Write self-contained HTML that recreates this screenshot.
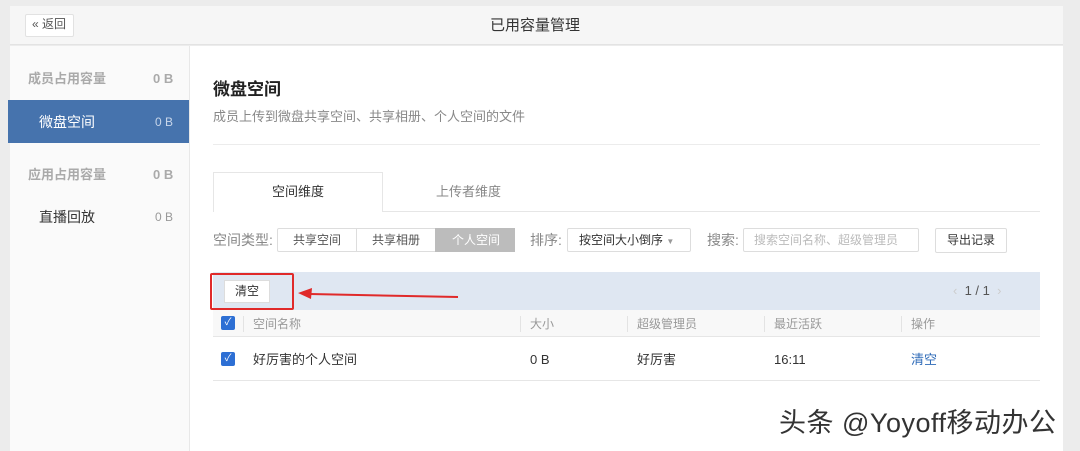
<!DOCTYPE html>
<html><head><meta charset="utf-8"><style>
*{margin:0;padding:0;box-sizing:border-box}
body{width:1080px;height:451px;overflow:hidden;background:#ececec;font-family:"Liberation Sans","Noto Sans CJK SC",sans-serif;position:relative}
.abs{position:absolute}
.hdr{left:10px;top:6px;width:1053px;height:39px;background:#f6f6f6;border-bottom:1px solid #e3e3e3}
.main{left:10px;top:46px;width:1053px;height:405px;background:#fff}
.side{left:10px;top:46px;width:180px;height:405px;background:#fafafa;border-right:1px solid #e8e8e8}
.t{position:absolute;white-space:nowrap;line-height:1}
</style></head><body>
<div class="abs hdr"></div>
<div class="abs" style="left:25px;top:14px;width:49px;height:23px;background:#fff;border:1px solid #e2e2e2;border-radius:2px;font-size:12px;color:#555;line-height:19px;padding-left:6px">« 返回</div>
<div class="t" style="left:490px;top:18px;font-size:15px;color:#333">已用容量管理</div>
<div class="abs main"></div>
<div class="abs side"></div>
<div class="t" style="left:28px;top:72px;font-size:13px;color:#aaa;font-weight:bold">成员占用容量</div>
<div class="t" style="left:153px;top:72px;font-size:13px;color:#aaa;font-weight:bold">0 B</div>
<div class="abs" style="left:8px;top:100px;width:181px;height:43px;background:#4673ad"></div>
<div class="t" style="left:39px;top:115px;font-size:14px;color:#fff">微盘空间</div>
<div class="t" style="left:155px;top:116px;font-size:12px;color:#c8d6ea">0 B</div>
<div class="t" style="left:28px;top:168px;font-size:13px;color:#aaa;font-weight:bold">应用占用容量</div>
<div class="t" style="left:153px;top:168px;font-size:13px;color:#aaa;font-weight:bold">0 B</div>
<div class="t" style="left:39px;top:210px;font-size:14px;color:#333">直播回放</div>
<div class="t" style="left:155px;top:211px;font-size:12px;color:#999">0 B</div>

<div class="t" style="left:213px;top:81px;font-size:17px;font-weight:bold;color:#222">微盘空间</div>
<div class="t" style="left:213px;top:110px;font-size:13px;color:#888">成员上传到微盘共享空间、共享相册、个人空间的文件</div>
<div class="abs" style="left:213px;top:144px;width:827px;height:1px;background:#ececec"></div>
<div class="abs" style="left:213px;top:211px;width:827px;height:1px;background:#e6e6e6"></div>
<div class="abs" style="left:213px;top:172px;width:170px;height:40px;background:#fff;border:1px solid #e6e6e6;border-bottom:none"></div>
<div class="t" style="left:272px;top:185px;font-size:13px;color:#333">空间维度</div>
<div class="t" style="left:436px;top:185px;font-size:13px;color:#888">上传者维度</div>

<div class="t" style="left:213px;top:233px;font-size:14px;color:#888">空间类型:</div>
<div class="abs" style="left:277px;top:228px;width:238px;height:24px;border:1px solid #ddd;border-radius:2px;background:#fff"></div>
<div class="abs" style="left:356px;top:228px;width:1px;height:24px;background:#ddd"></div>
<div class="abs" style="left:435px;top:228px;width:80px;height:24px;background:#bcbcbc"></div>
<div class="t" style="left:293px;top:234px;font-size:12px;color:#555">共享空间</div>
<div class="t" style="left:372px;top:234px;font-size:12px;color:#555">共享相册</div>
<div class="t" style="left:452px;top:234px;font-size:12px;color:#fff">个人空间</div>
<div class="t" style="left:530px;top:233px;font-size:14px;color:#888">排序:</div>
<div class="abs" style="left:567px;top:228px;width:124px;height:24px;border:1px solid #ddd;border-radius:2px;background:#fff"></div>
<div class="t" style="left:579px;top:234px;font-size:12px;color:#333">按空间大小倒序 <span style="color:#999;font-size:8px">▼</span></div>
<div class="t" style="left:707px;top:233px;font-size:14px;color:#888">搜索:</div>
<div class="abs" style="left:743px;top:228px;width:176px;height:24px;border:1px solid #ddd;border-radius:2px;background:#fff"></div>
<div class="t" style="left:754px;top:234px;font-size:12px;color:#bbb">搜索空间名称、超级管理员</div>
<div class="abs" style="left:935px;top:228px;width:72px;height:25px;border:1px solid #ddd;border-radius:2px;background:#fff"></div>
<div class="t" style="left:947px;top:234px;font-size:12px;color:#333">导出记录</div>

<div class="abs" style="left:213px;top:272px;width:827px;height:38px;background:#dfe7f2"></div>
<div class="abs" style="left:224px;top:280px;width:46px;height:23px;background:#fff;border:1px solid #ddd"></div>
<div class="t" style="left:235px;top:285px;font-size:12px;color:#333">清空</div>
<div class="abs" style="left:210px;top:273px;width:84px;height:37px;border:2px solid #e02a2a;border-radius:2px"></div>
<svg class="abs" style="left:296px;top:287px" width="165" height="14"><path d="M162 10 L14 7" stroke="#e02a2a" stroke-width="2"/><path d="M2 6 L16 1 L15 12 Z" fill="#e02a2a"/></svg>
<div class="t" style="left:953px;top:284px;font-size:13px;color:#555"><span style="color:#ccc">‹</span>&nbsp;&nbsp;1 / 1&nbsp;&nbsp;<span style="color:#ccc">›</span></div>

<div class="abs" style="left:213px;top:310px;width:827px;height:27px;background:#f8f8f8;border-bottom:1px solid #e6e6e6"></div>
<div class="abs" style="left:221px;top:316px;width:14px;height:14px;background:#2d6fd4;border-radius:2px;color:#fff;font-size:10px;text-align:center;line-height:14px">✓</div>
<div class="abs" style="left:243px;top:316px;width:1px;height:16px;background:#e3e3e3"></div>
<div class="t" style="left:253px;top:318px;font-size:12px;color:#999">空间名称</div>
<div class="abs" style="left:520px;top:316px;width:1px;height:16px;background:#e3e3e3"></div>
<div class="t" style="left:530px;top:318px;font-size:12px;color:#999">大小</div>
<div class="abs" style="left:627px;top:316px;width:1px;height:16px;background:#e3e3e3"></div>
<div class="t" style="left:637px;top:318px;font-size:12px;color:#999">超级管理员</div>
<div class="abs" style="left:764px;top:316px;width:1px;height:16px;background:#e3e3e3"></div>
<div class="t" style="left:774px;top:318px;font-size:12px;color:#999">最近活跃</div>
<div class="abs" style="left:901px;top:316px;width:1px;height:16px;background:#e3e3e3"></div>
<div class="t" style="left:911px;top:318px;font-size:12px;color:#999">操作</div>

<div class="abs" style="left:221px;top:352px;width:14px;height:14px;background:#2d6fd4;border-radius:2px;color:#fff;font-size:10px;text-align:center;line-height:14px">✓</div>
<div class="t" style="left:253px;top:353px;font-size:13px;color:#333">好厉害的个人空间</div>
<div class="t" style="left:530px;top:353px;font-size:13px;color:#333">0 B</div>
<div class="t" style="left:637px;top:353px;font-size:13px;color:#333">好厉害</div>
<div class="t" style="left:774px;top:353px;font-size:13px;color:#333">16:11</div>
<div class="t" style="left:911px;top:353px;font-size:13px;color:#2f6bb8">清空</div>
<div class="abs" style="left:213px;top:380px;width:827px;height:1px;background:#e6e6e6"></div>

<div class="t" style="left:779px;top:410px;font-size:27px;color:#333;letter-spacing:0.5px;text-shadow:0 0 2px #fff">头条 @Yoyoff移动办公</div>
</body></html>
